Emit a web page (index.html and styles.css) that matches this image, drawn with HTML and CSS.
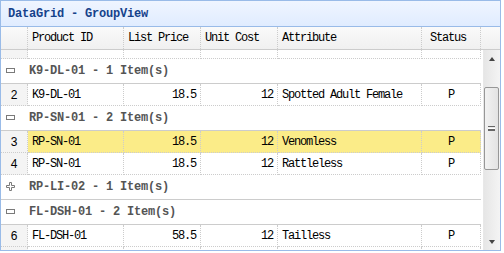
FILE: index.html
```html
<!DOCTYPE html>
<html lang="en">

<head>
    <meta charset="UTF-8">
    <meta name="viewport" content="width=device-width, initial-scale=1.0">
    <link rel="stylesheet" href="styles.css">
    <title>DataGrid - GroupView</title>
</head>

<body>
    <section class="panel">
        <div class="panel-header">
            <span class="panel-title">DataGrid - GroupView</span>
        </div>

        <!-- column headers -->
        <div class="grid-header">
            <table class="grid-table">
                <colgroup>
                    <col class="c-num"><col class="c-id"><col class="c-list"><col class="c-cost"><col class="c-attr"><col class="c-status">
                </colgroup>
                <tr class="head-row">
                    <td class="rownum"></td>
                    <td>Product ID</td>
                    <td>List Price</td>
                    <td>Unit Cost</td>
                    <td>Attribute</td>
                    <td class="status-head">Status</td>
                </tr>
            </table>
            <div class="header-fill"></div>
        </div>

        <div class="grid-body">
            <div class="view">
                <table class="grid-table rows">
                    <colgroup>
                        <col class="c-num"><col class="c-id"><col class="c-list"><col class="c-cost"><col class="c-attr"><col class="c-status">
                    </colgroup>
                    <tr class="group">
                        <td colspan="6">
                            <svg class="expander" width="9" height="9" viewBox="0 0 9 9"><rect x="0.5" y="2.5" width="8" height="4" /></svg>FI-SW-01 - 1 Item(s)
                        </td>
                    </tr>
                    <tr class="row partial">
                        <td class="rownum">1</td>
                        <td>FI-SW-01</td>
                        <td class="num">36.5</td>
                        <td class="num">10</td>
                        <td>Large</td>
                        <td class="center">P</td>
                    </tr>
                    <tr class="group">
                        <td colspan="6">
                            <svg class="expander" width="9" height="9" viewBox="0 0 9 9"><rect x="0.5" y="2.5" width="8" height="4" /></svg>K9-DL-01 - 1 Item(s)
                        </td>
                    </tr>
                    <tr class="row">
                        <td class="rownum">2</td>
                        <td>K9-DL-01</td>
                        <td class="num">18.5</td>
                        <td class="num">12</td>
                        <td>Spotted Adult Female</td>
                        <td class="center">P</td>
                    </tr>
                    <tr class="group">
                        <td colspan="6">
                            <svg class="expander" width="9" height="9" viewBox="0 0 9 9"><rect x="0.5" y="2.5" width="8" height="4" /></svg>RP-SN-01 - 2 Item(s)
                        </td>
                    </tr>
                    <tr class="row selected">
                        <td class="rownum">3</td>
                        <td>RP-SN-01</td>
                        <td class="num">18.5</td>
                        <td class="num">12</td>
                        <td>Venomless</td>
                        <td class="center">P</td>
                    </tr>
                    <tr class="row">
                        <td class="rownum">4</td>
                        <td>RP-SN-01</td>
                        <td class="num">18.5</td>
                        <td class="num">12</td>
                        <td>Rattleless</td>
                        <td class="center">P</td>
                    </tr>
                    <tr class="group">
                        <td colspan="6">
                            <svg class="expander" width="9" height="9" viewBox="0 0 9 9"><polygon points="3.5,0.5 5.5,0.5 5.5,3.5 8.5,3.5 8.5,5.5 5.5,5.5 5.5,8.5 3.5,8.5 3.5,5.5 0.5,5.5 0.5,3.5 3.5,3.5" /></svg>RP-LI-02 - 1 Item(s)
                        </td>
                    </tr>
                    <tr class="group">
                        <td colspan="6">
                            <svg class="expander" width="9" height="9" viewBox="0 0 9 9"><rect x="0.5" y="2.5" width="8" height="4" /></svg>FL-DSH-01 - 2 Item(s)
                        </td>
                    </tr>
                    <tr class="row">
                        <td class="rownum">6</td>
                        <td>FL-DSH-01</td>
                        <td class="num">58.5</td>
                        <td class="num">12</td>
                        <td>Tailless</td>
                        <td class="center">P</td>
                    </tr>
                    <tr class="row">
                        <td class="rownum">7</td>
                        <td>FL-DSH-01</td>
                        <td class="num">23.5</td>
                        <td class="num">12</td>
                        <td>With tail</td>
                        <td class="center">P</td>
                    </tr>
                </table>
            </div>

            <!-- vertical scrollbar -->
            <div class="scrollbar">
                <div class="sb-btn"><span class="arrow up"></span></div>
                <div class="sb-track">
                    <div class="sb-thumb"><span class="grip"></span></div>
                </div>
                <div class="sb-btn"><span class="arrow down"></span></div>
            </div>
        </div>
    </section>
</body>

</html>
```

FILE: styles.css
```css
* {
    margin: 0;
    padding: 0;
    box-sizing: border-box;
}

body {
    background: #fff;
    font-family: "Liberation Mono", "DejaVu Sans Mono", monospace;
    font-size: 12px;
    color: #000;
}

.panel {
    width: 501px;
    height: 251px;
    border: 1px solid #99bbe8;
    display: flex;
    flex-direction: column;
}

.panel-header {
    height: 26px;
    padding: 1px 0 0 7px;
    display: flex;
    align-items: center;
    background: linear-gradient(#eff5ff, #e0ecff);
    border-bottom: 1px solid #99bbe8;
}

.panel-title {
    font-weight: bold;
    color: #15428b;
    letter-spacing: -0.2px;
}

/* header */

.grid-header {
    display: flex;
    height: 23px;
    background: linear-gradient(#fafafa, #f0f0f0);
    border-bottom: 1px solid #ccc;
}

.header-fill {
    flex: 1;
}

.grid-table {
    width: 480px;
    table-layout: fixed;
    border-collapse: separate;
    border-spacing: 0;
}

.c-num { width: 27px; }
.c-id { width: 96px; }
.c-list { width: 77px; }
.c-cost { width: 77px; }
.c-attr { width: 144px; }
.c-status { width: 59px; }

.grid-table td {
    padding: 0 4px;
    white-space: nowrap;
    overflow: hidden;
    letter-spacing: -1.2px;
    border-right: 1px dotted #ccc;
}

.head-row td {
    height: 22px;
}

.head-row .status-head {
    padding-left: 8px;
}

.head-row .rownum {
    background: none;
}

/* body */

.grid-body {
    display: flex;
    height: 200px;
}

.view {
    width: 482px;
    overflow: hidden;
}

.rows {
    margin-top: -38px;
}

.row td {
    height: 22px;
    border-bottom: 1px dotted #ccc;
}

.row.partial td {
    padding-bottom: 7px;
}

.rownum {
    text-align: center;
    background: #f4f4f4;
    font-family: "Liberation Sans", sans-serif;
}

.grid-table td.rownum {
    letter-spacing: 0;
}

.num {
    text-align: right;
}

.center {
    text-align: center;
}

.selected td {
    background: #fbec88;
}

.selected td.rownum {
    background: #f4f4f4;
}

.group td {
    height: 25px;
    padding-left: 5px;
    border-right: none;
    border-bottom: 1px solid #ccc;
    font-weight: bold;
    color: #555;
    letter-spacing: -0.2px;
}

.expander {
    margin-right: 14px;
    vertical-align: -1px;
    fill: #fff;
    stroke: #7a7a7a;
    stroke-width: 1;
}

/* scrollbar */

.scrollbar {
    width: 17px;
    display: flex;
    flex-direction: column;
    background: linear-gradient(to right, #e6e6e6, #f4f4f4);
    border-left: 1px solid #e8e8e8;
}

.sb-btn {
    height: 17px;
    display: flex;
    align-items: center;
    justify-content: center;
}

.arrow {
    width: 0;
    height: 0;
    border-left: 3.5px solid transparent;
    border-right: 3.5px solid transparent;
}

.arrow.up {
    border-bottom: 4px solid #444;
}

.arrow.down {
    border-top: 4px solid #444;
}

.sb-track {
    flex: 1;
    padding: 20px 0 0 0;
}

.sb-thumb {
    height: 83px;
    margin: 0 1px 0 0;
    border: 1px solid #979797;
    border-radius: 2px;
    background: linear-gradient(to right, #f2f2f2, #e3e3e3);
    display: flex;
    align-items: center;
    justify-content: center;
}

.grip {
    width: 7px;
    height: 5px;
    border-top: 1px solid #666;
    border-bottom: 1px solid #666;
    background: linear-gradient(#fff 1px, #666 1px, #666 2px, #fff 2px) 0 1px / 7px 3px no-repeat;
}
```
